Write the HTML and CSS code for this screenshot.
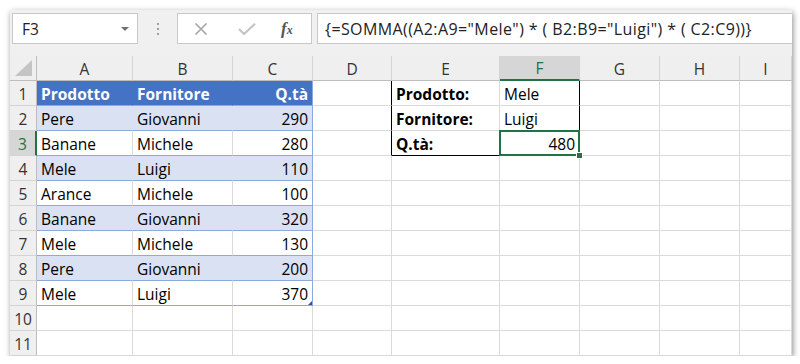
FILE: index.html
```html
<!DOCTYPE html>
<html lang="it">
<head>
    <meta charset="UTF-8">
    <title>SOMMA con condizioni</title>
    <link rel="stylesheet" href="styles.css">
</head>
<body>
    <div class="window">
        <div class="toolbar">
            <div class="namebox">
                <span>F3</span>
                <span class="caret"></span>
            </div>
            <div class="grip"><i></i><i></i><i></i></div>
            <div class="fnbox">
                <svg class="icon" width="16" height="12" viewBox="0 0 16 12">
                    <path d="M2.5 0.5 L13.5 11.5 M13.5 0.5 L2.5 11.5" stroke="#a6a6a6" stroke-width="1.6" fill="none"/>
                </svg>
                <svg class="icon" width="18" height="12" viewBox="0 0 18 12">
                    <path d="M1 6 L6 11 L17 0.8" stroke="#c4c4c4" stroke-width="2.2" fill="none"/>
                </svg>
                <span class="fx">f<sub>x</sub></span>
            </div>
            <div class="formula">{=SOMMA((A2:A9="Mele") * ( B2:B9="Luigi") * ( C2:C9))}</div>
        </div>
        <div class="sheet" id="sheet"></div>
    </div>

    <script>
        const cols = ['A', 'B', 'C', 'D', 'E', 'F', 'G', 'H', 'I'];

        // table A1:C9
        const table = [
            ['Prodotto', 'Fornitore', 'Q.tà'],
            ['Pere', 'Giovanni', 290],
            ['Banane', 'Michele', 280],
            ['Mele', 'Luigi', 110],
            ['Arance', 'Michele', 100],
            ['Banane', 'Giovanni', 320],
            ['Mele', 'Michele', 130],
            ['Pere', 'Giovanni', 200],
            ['Mele', 'Luigi', 370]
        ];

        // criteria box E1:F3
        const criteria = [
            ['Prodotto:', 'Mele'],
            ['Fornitore:', 'Luigi'],
            ['Q.tà:', 480]
        ];

        const sheet = document.getElementById('sheet');

        function cell(text, cls) {
            const div = document.createElement('div');
            div.className = cls;
            div.textContent = text;
            sheet.appendChild(div);
            return div;
        }

        // header row
        cell('', 'corner');
        cols.forEach(c => cell(c, c === 'F' ? 'ch active' : 'ch'));

        for (let r = 1; r <= 11; r++) {
            cell(r, r === 3 ? 'rh active' : 'rh');
            cols.forEach((c, i) => {
                let text = '';
                let cls = 'cell';

                if (r <= 9 && i < 3) {
                    text = table[r - 1][i];
                    if (r === 1) cls += ' th';
                    else if (r % 2 === 0) cls += ' band';
                    else cls += ' tbl';
                    if (i === 2) cls += ' tbl-end';
                    if (r === 9 && i === 2) cls += ' resize';
                }
                if (r <= 3 && c === 'D') cls += ' box-left';
                if (r <= 3 && (c === 'E' || c === 'F')) {
                    text = criteria[r - 1][c === 'E' ? 0 : 1];
                    if (c === 'E') cls += ' bold';
                    if (c === 'F') cls += ' box-right';
                    if (r === 3) cls += ' box-bottom';
                    if (r === 3 && c === 'F') cls += ' selected';
                }
                if (typeof text === 'number') cls += ' num';

                cell(text, cls);
            });
        }
    </script>
</body>
</html>
```

FILE: styles.css
```css
body {
    margin: 0;
    background: #ffffff;
    font-family: "Open Sans", sans-serif;
}

.window {
    margin: 10px 0 0 10px;
    width: 782px;
    height: 346px;
    background: #f0f0f0;
    box-shadow: 1px 2px 6px rgba(0, 0, 0, 0.45);
    overflow: hidden;
}

/* formula bar */
.toolbar {
    height: 46px;
    display: flex;
    align-items: flex-start;
    padding: 3px 0 0 2px;
    box-sizing: border-box;
}
.namebox {
    width: 126px;
    height: 31px;
    box-sizing: border-box;
    border: 1px solid #c8c8c8;
    background: #fff;
    display: flex;
    align-items: center;
    justify-content: space-between;
    padding: 0 8px 0 9px;
    font-size: 15.5px;
    color: #222;
}
.caret {
    width: 0;
    height: 0;
    border-left: 4px solid transparent;
    border-right: 4px solid transparent;
    border-top: 4px solid #707070;
}
.grip {
    width: 39px;
    height: 31px;
    display: flex;
    flex-direction: column;
    align-items: center;
    justify-content: center;
    gap: 3px;
}
.grip i {
    width: 2px;
    height: 2px;
    background: #a0a0a0;
}
.fnbox {
    width: 135px;
    height: 31px;
    box-sizing: border-box;
    border: 1px solid #c8c8c8;
    background: #fff;
    display: flex;
    align-items: center;
    padding: 0 0 0 15px;
    gap: 29px;
}
.fx {
    font-family: "Liberation Serif", serif;
    font-style: italic;
    font-weight: bold;
    font-size: 17px;
    color: #555;
    margin-left: -4px;
}
.fx sub {
    font-size: 12px;
    vertical-align: 0;
}
.formula {
    margin-left: 5px;
    flex: 1;
    height: 31px;
    box-sizing: border-box;
    border: 1px solid #c8c8c8;
    border-right: none;
    background: #fff;
    display: flex;
    align-items: center;
    padding-left: 7px;
    font-size: 16px;
    letter-spacing: 0.4px;
    color: #222;
    white-space: nowrap;
}

/* grid */
.sheet {
    display: grid;
    grid-template-columns: 27px 96px 100px 80px 79px 108px 80px 80px 80px 52px;
    grid-auto-rows: 25px;
    background: #fff;
    font-size: 15.5px;
}
.corner, .ch, .rh {
    background: #efefef;
    color: #333;
    box-sizing: border-box;
    display: flex;
    align-items: center;
    justify-content: center;
}
.corner {
    position: relative;
    border-right: 1px solid #bdbdbd;
    border-bottom: 1px solid #bdbdbd;
}
.corner::after {
    content: "";
    position: absolute;
    right: 4px;
    bottom: 4px;
    width: 17px;
    height: 16px;
    background: #c4c4c4;
    clip-path: polygon(100% 0, 100% 100%, 0 100%);
}
.ch {
    border-right: 1px solid #d4d4d4;
    border-bottom: 1px solid #bdbdbd;
    padding-top: 1px;
}
.rh {
    border-right: 1px solid #bdbdbd;
    border-bottom: 1px solid #d4d4d4;
    padding-top: 2px;
}
.ch.active {
    background: #d6d6d6;
    color: #217346;
    border-bottom: 2px solid #217346;
}
.rh.active {
    background: #d6d6d6;
    color: #217346;
    border-right: 2px solid #217346;
}

.cell {
    position: relative;
    box-sizing: border-box;
    border-right: 1px solid #dadada;
    border-bottom: 1px solid #dadada;
    padding: 0 4px 0 4px;
    display: flex;
    align-items: flex-end;
    white-space: nowrap;
    color: #000;
}
.num {
    justify-content: flex-end;
}
.bold {
    font-weight: bold;
}

/* excel table */
.th {
    background: #4472c4;
    color: #fff;
    font-weight: bold;
    border-right-color: #4472c4;
    border-bottom-color: #8ea9db;
}
.th.tbl-end {
    justify-content: flex-end;
}
.band {
    background: #d9e1f2;
    border-right-color: #d9e1f2;
    border-bottom-color: #8ea9db;
}
.tbl {
    border-bottom-color: #8ea9db;
}
.tbl-end {
    border-right-color: #8ea9db;
}
.resize::after {
    content: "";
    position: absolute;
    right: 0;
    bottom: 0;
    width: 4px;
    height: 4px;
    background: #2f5597;
    clip-path: polygon(100% 0, 100% 100%, 0 100%);
}

/* criteria box */
.box-left {
    border-right-color: #000;
}
.box-right {
    border-right-color: #000;
}
.box-bottom {
    border-bottom-color: #000;
}
.selected::after {
    content: "";
    position: absolute;
    left: -1px;
    top: -1px;
    right: -1px;
    bottom: -1px;
    border: 2px solid #217346;
}
.selected::before {
    content: "";
    position: absolute;
    right: -4px;
    bottom: -4px;
    width: 5px;
    height: 5px;
    background: #217346;
    border: 1px solid #fff;
    z-index: 1;
}
```
